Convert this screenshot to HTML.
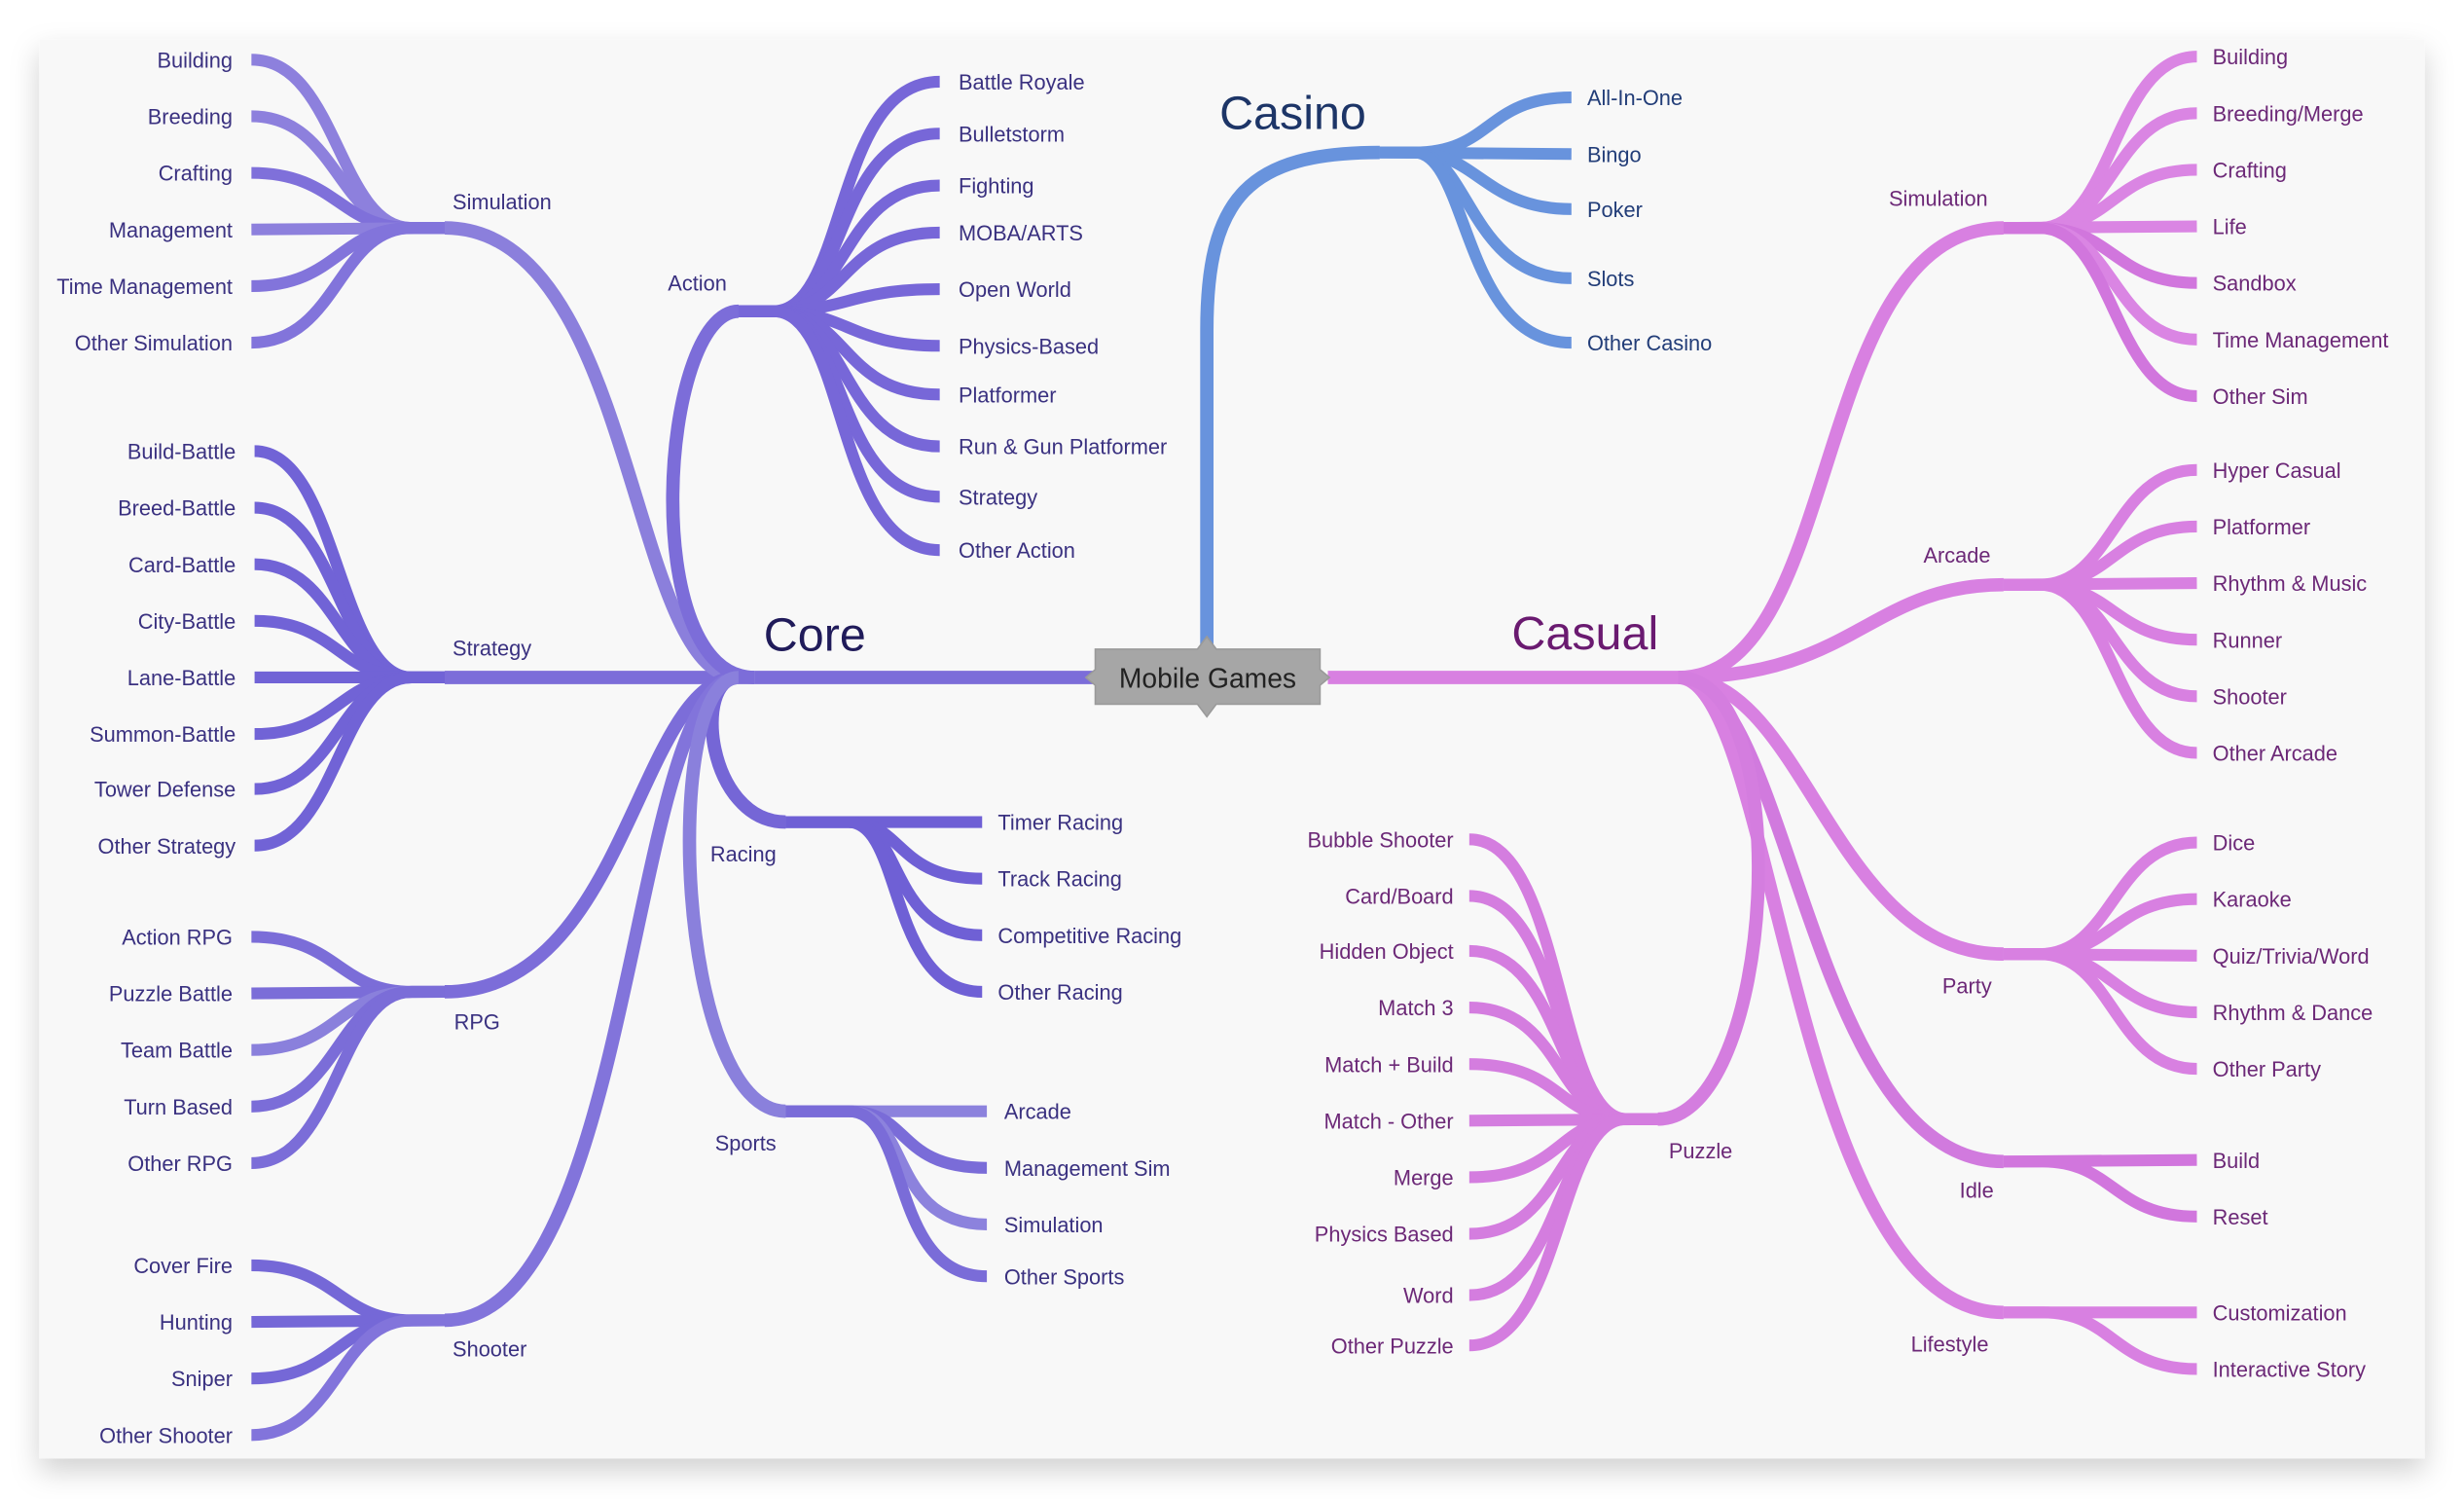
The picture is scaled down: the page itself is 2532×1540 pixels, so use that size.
<!DOCTYPE html>
<html><head><meta charset="utf-8"><style>
html,body{margin:0;padding:0;background:#fff;width:2532px;height:1540px;overflow:hidden}
svg{display:block}
text{font-family:"Liberation Sans",Arial,sans-serif}
</style></head><body>
<svg width="2532" height="1540" viewBox="0 0 1568 953.7" preserveAspectRatio="none" xmlns="http://www.w3.org/2000/svg">
<defs><filter id="sh" x="-5%" y="-5%" width="110%" height="115%"><feDropShadow dx="0" dy="8" stdDeviation="9" flood-color="#000" flood-opacity="0.18"/></filter></defs>
<rect x="25" y="25" width="1518" height="903" fill="#f8f8f8" filter="url(#sh)"/>
<g fill="none" stroke-linecap="butt">
<!-- CORE -->
<g stroke="#7c6dd9" stroke-width="8.5">
<path d="M697,431 L480,431"/>
<path d="M480,431 L283,431"/>
<path d="M470,431 C400,431 405,145 283,145" stroke="#8b7fdc"/>
<path d="M470,431 C405,431 400,631 283,631"/>
<path d="M470,431 C400,431 405,840 283,840" stroke="#8274db"/>
<path d="M480,431 C405,431 420,198 470,198"/>
<path d="M470,431 C440,431 450,523 500,523" stroke="#7566d6"/>
<path d="M470,431 C420,431 430,707 500,707" stroke="#8a80dc"/>
</g>
<g stroke="#8d80dd" stroke-width="7.5">
<path d="M283,145 L262,145 C215,145 215,38 160,38"/>
<path d="M283,145 L262,145 C215,145 215,74 160,74"/>
<path d="M283,145 L262,145 C215,145 215,110 160,110" stroke="#7f70da"/>
<path d="M283,145 L160,146"/>
<path d="M283,145 L262,145 C215,145 215,182 160,182" stroke="#8274db"/>
<path d="M283,145 L262,145 C215,145 215,218 160,218" stroke="#8274db"/>
</g>
<g stroke="#7163d6" stroke-width="7.5">
<path d="M283,431 L262,431 C215,431 215,287 162,287"/>
<path d="M283,431 L262,431 C215,431 215,323 162,323"/>
<path d="M283,431 L262,431 C215,431 215,359 162,359"/>
<path d="M283,431 L262,431 C215,431 215,395 162,395"/>
<path d="M283,431 L162,431"/>
<path d="M283,431 L262,431 C215,431 215,467 162,467"/>
<path d="M283,431 L262,431 C215,431 215,502 162,502"/>
<path d="M283,431 L262,431 C215,431 215,538 162,538"/>
</g>
<g stroke="#7b6dd8" stroke-width="7.5">
<path d="M283,631 L262,631 C215,631 215,596 160,596"/>
<path d="M283,631 L160,632"/>
<path d="M283,631 L262,631 C215,631 215,668 160,668" stroke="#8a80dc"/>
<path d="M283,631 L262,631 C215,631 215,704 160,704"/>
<path d="M283,631 L262,631 C215,631 215,740 160,740"/>
</g>
<g stroke="#7568d7" stroke-width="7.5">
<path d="M283,840 L262,840 C215,840 215,805 160,805"/>
<path d="M283,840 L160,841"/>
<path d="M283,840 L262,840 C215,840 215,877 160,877"/>
<path d="M283,840 L262,840 C215,840 215,913 160,913" stroke="#8274db"/>
</g>
<g stroke="#7767d8" stroke-width="7.5">
<path d="M470,198 L492,198 C540,198 530,52 598,52"/>
<path d="M470,198 L492,198 C540,198 530,85 598,85"/>
<path d="M470,198 L492,198 C540,198 535,118 598,118"/>
<path d="M470,198 L492,198 C540,198 535,148 598,148"/>
<path d="M470,198 L492,198 C540,198 540,184 598,184"/>
<path d="M470,198 L492,198 C540,198 540,220 598,220"/>
<path d="M470,198 L492,198 C540,198 535,251 598,251"/>
<path d="M470,198 L492,198 C540,198 535,284 598,284"/>
<path d="M470,198 L492,198 C540,198 530,316 598,316"/>
<path d="M470,198 L492,198 C540,198 530,350 598,350"/>
</g>
<g stroke="#6f60d5" stroke-width="7.5">
<path d="M500,523 L625,523"/>
<path d="M500,523 L540,523 C575,523 570,559 625,559"/>
<path d="M500,523 L540,523 C575,523 565,595 625,595"/>
<path d="M500,523 L540,523 C575,523 565,631 625,631"/>
</g>
<g stroke="#8c82dd" stroke-width="7.5">
<path d="M500,707 L628,707"/>
<path d="M500,707 L540,707 C580,707 570,743 628,743" stroke="#7a6cd8"/>
<path d="M500,707 L540,707 C580,707 565,779 628,779"/>
<path d="M500,707 L540,707 C580,707 565,812 628,812" stroke="#7a6cd8"/>
</g>
<!-- CASINO -->
<g stroke="#6893dd" stroke-width="8.5">
<path d="M768,410 L768,210 C768,125 795,97 878,97"/>
</g>
<g stroke="#6893dd" stroke-width="7.5">
<path d="M878,97 L900,97 C950,97 945,62 1000,62"/>
<path d="M878,97 L1000,98"/>
<path d="M878,97 L900,97 C940,97 945,133 1000,133"/>
<path d="M878,97 L900,97 C935,97 935,177 1000,177"/>
<path d="M878,97 L900,97 C935,97 930,218 1000,218"/>
</g>
<!-- CASUAL -->
<g stroke="#d880e1" stroke-width="8.5">
<path d="M845,431 L1068,431"/>
<path d="M1068,431 C1175,431 1150,145 1275,145"/>
<path d="M1068,431 C1180,431 1190,372 1275,372"/>
<path d="M1068,431 C1150,431 1165,607 1275,607"/>
<path d="M1068,431 C1140,431 1150,739 1275,739" stroke="#d17ade"/>
<path d="M1068,431 C1130,431 1140,835 1275,835"/>
<path d="M1068,431 C1145,431 1130,712 1055,712" stroke="#d47ddf"/>
</g>
<g stroke="#da85e3" stroke-width="7.5">
<path d="M1275,145 L1298,145 C1345,145 1345,36 1398,36"/>
<path d="M1275,145 L1298,145 C1345,145 1345,72 1398,72"/>
<path d="M1275,145 L1298,145 C1345,145 1345,108 1398,108"/>
<path d="M1275,145 L1398,144"/>
<path d="M1275,145 L1298,145 C1345,145 1345,180 1398,180" stroke="#d176dd"/>
<path d="M1275,145 L1298,145 C1345,145 1345,216 1398,216"/>
<path d="M1275,145 L1298,145 C1345,145 1345,252 1398,252" stroke="#d176dd"/>
</g>
<g stroke="#d880e1" stroke-width="7.5">
<path d="M1275,372 L1298,372 C1345,372 1345,299 1398,299"/>
<path d="M1275,372 L1298,372 C1345,372 1345,335 1398,335"/>
<path d="M1275,372 L1398,371"/>
<path d="M1275,372 L1298,372 C1345,372 1345,407 1398,407"/>
<path d="M1275,372 L1298,372 C1345,372 1345,443 1398,443"/>
<path d="M1275,372 L1298,372 C1345,372 1345,479 1398,479"/>
</g>
<g stroke="#d880e1" stroke-width="7.5">
<path d="M1275,607 L1298,607 C1345,607 1345,536 1398,536"/>
<path d="M1275,607 L1298,607 C1345,607 1345,572 1398,572"/>
<path d="M1275,607 L1398,608"/>
<path d="M1275,607 L1298,607 C1345,607 1345,644 1398,644"/>
<path d="M1275,607 L1298,607 C1345,607 1345,680 1398,680"/>
<path d="M1275,739 L1398,738" stroke="#d176dd"/>
<path d="M1275,739 L1300,739 C1345,739 1345,774 1398,774" stroke="#d176dd"/>
<path d="M1275,835 L1398,835"/>
<path d="M1275,835 L1300,835 C1345,835 1345,871 1398,871"/>
</g>
<g stroke="#d47ddf" stroke-width="7.5">
<path d="M1055,712 L1035,712 C990,712 995,534 935,534"/>
<path d="M1055,712 L1035,712 C990,712 995,570 935,570"/>
<path d="M1055,712 L1035,712 C990,712 995,605 935,605"/>
<path d="M1055,712 L1035,712 C990,712 995,641 935,641"/>
<path d="M1055,712 L1035,712 C990,712 995,677 935,677"/>
<path d="M1055,712 L935,713"/>
<path d="M1055,712 L1035,712 C990,712 995,749 935,749"/>
<path d="M1055,712 L1035,712 C990,712 995,785 935,785"/>
<path d="M1055,712 L1035,712 C990,712 995,824 935,824"/>
<path d="M1055,712 L1035,712 C990,712 995,856 935,856"/>
</g>
</g>
<!-- center box -->
<polygon points="697,413 762,413 768,405 774,413 840,413 840,426 846,431 840,436 840,448 774,448 768,456 762,448 697,448 697,436 691,431 697,426" fill="#a6a6a6" stroke="#9a9a9a" stroke-width="1"/>
<text x="768.5" y="437.5" font-size="17.5" fill="#222" text-anchor="middle">Mobile Games</text>
<!-- titles -->
<text x="486" y="414" font-size="30" fill="#201b5a">Core</text>
<text x="776" y="82" font-size="30" fill="#1d3567">Casino</text>
<text x="962" y="413" font-size="30" fill="#6a1a70">Casual</text>
<g font-size="13.5" fill="#3a3180">
<text x="288" y="133">Simulation</text>
<text x="288" y="417">Strategy</text>
<text x="289" y="655">RPG</text>
<text x="288" y="863">Shooter</text>
<text x="425" y="185">Action</text>
<text x="452" y="548">Racing</text>
<text x="455" y="732">Sports</text>
<g text-anchor="end">
<text x="148" y="43">Building</text><text x="148" y="79">Breeding</text><text x="148" y="115">Crafting</text><text x="148" y="151">Management</text><text x="148" y="187">Time Management</text><text x="148" y="223">Other Simulation</text>
<text x="150" y="292">Build-Battle</text><text x="150" y="328">Breed-Battle</text><text x="150" y="364">Card-Battle</text><text x="150" y="400">City-Battle</text><text x="150" y="436">Lane-Battle</text><text x="150" y="472">Summon-Battle</text><text x="150" y="507">Tower Defense</text><text x="150" y="543">Other Strategy</text>
<text x="148" y="601">Action RPG</text><text x="148" y="637">Puzzle Battle</text><text x="148" y="673">Team Battle</text><text x="148" y="709">Turn Based</text><text x="148" y="745">Other RPG</text>
<text x="148" y="810">Cover Fire</text><text x="148" y="846">Hunting</text><text x="148" y="882">Sniper</text><text x="148" y="918">Other Shooter</text>
</g>
<text x="610" y="57">Battle Royale</text><text x="610" y="90">Bulletstorm</text><text x="610" y="123">Fighting</text><text x="610" y="153">MOBA/ARTS</text><text x="610" y="189">Open World</text><text x="610" y="225">Physics-Based</text><text x="610" y="256">Platformer</text><text x="610" y="289">Run &amp; Gun Platformer</text><text x="610" y="321">Strategy</text><text x="610" y="355">Other Action</text>
<text x="635" y="528">Timer Racing</text><text x="635" y="564">Track Racing</text><text x="635" y="600">Competitive Racing</text><text x="635" y="636">Other Racing</text>
<text x="639" y="712">Arcade</text><text x="639" y="748">Management Sim</text><text x="639" y="784">Simulation</text><text x="639" y="817">Other Sports</text>
</g>
<g font-size="13.5" fill="#223d78">
<text x="1010" y="67">All-In-One</text><text x="1010" y="103">Bingo</text><text x="1010" y="138">Poker</text><text x="1010" y="182">Slots</text><text x="1010" y="223">Other Casino</text>
</g>
<g font-size="13.5" fill="#6c2877">
<text x="1202" y="131">Simulation</text><text x="1224" y="358">Arcade</text><text x="1236" y="632">Party</text><text x="1247" y="762">Idle</text><text x="1216" y="860">Lifestyle</text><text x="1062" y="737">Puzzle</text>
<text x="1408" y="41">Building</text><text x="1408" y="77">Breeding/Merge</text><text x="1408" y="113">Crafting</text><text x="1408" y="149">Life</text><text x="1408" y="185">Sandbox</text><text x="1408" y="221">Time Management</text><text x="1408" y="257">Other Sim</text>
<text x="1408" y="304">Hyper Casual</text><text x="1408" y="340">Platformer</text><text x="1408" y="376">Rhythm &amp; Music</text><text x="1408" y="412">Runner</text><text x="1408" y="448">Shooter</text><text x="1408" y="484">Other Arcade</text>
<text x="1408" y="541">Dice</text><text x="1408" y="577">Karaoke</text><text x="1408" y="613">Quiz/Trivia/Word</text><text x="1408" y="649">Rhythm &amp; Dance</text><text x="1408" y="685">Other Party</text>
<text x="1408" y="743">Build</text><text x="1408" y="779">Reset</text>
<text x="1408" y="840">Customization</text><text x="1408" y="876">Interactive Story</text>
<g text-anchor="end">
<text x="925" y="539">Bubble Shooter</text><text x="925" y="575">Card/Board</text><text x="925" y="610">Hidden Object</text><text x="925" y="646">Match 3</text><text x="925" y="682">Match + Build</text><text x="925" y="718">Match - Other</text><text x="925" y="754">Merge</text><text x="925" y="790">Physics Based</text><text x="925" y="829">Word</text><text x="925" y="861">Other Puzzle</text>
</g>
</g>
</svg>
</body></html>
